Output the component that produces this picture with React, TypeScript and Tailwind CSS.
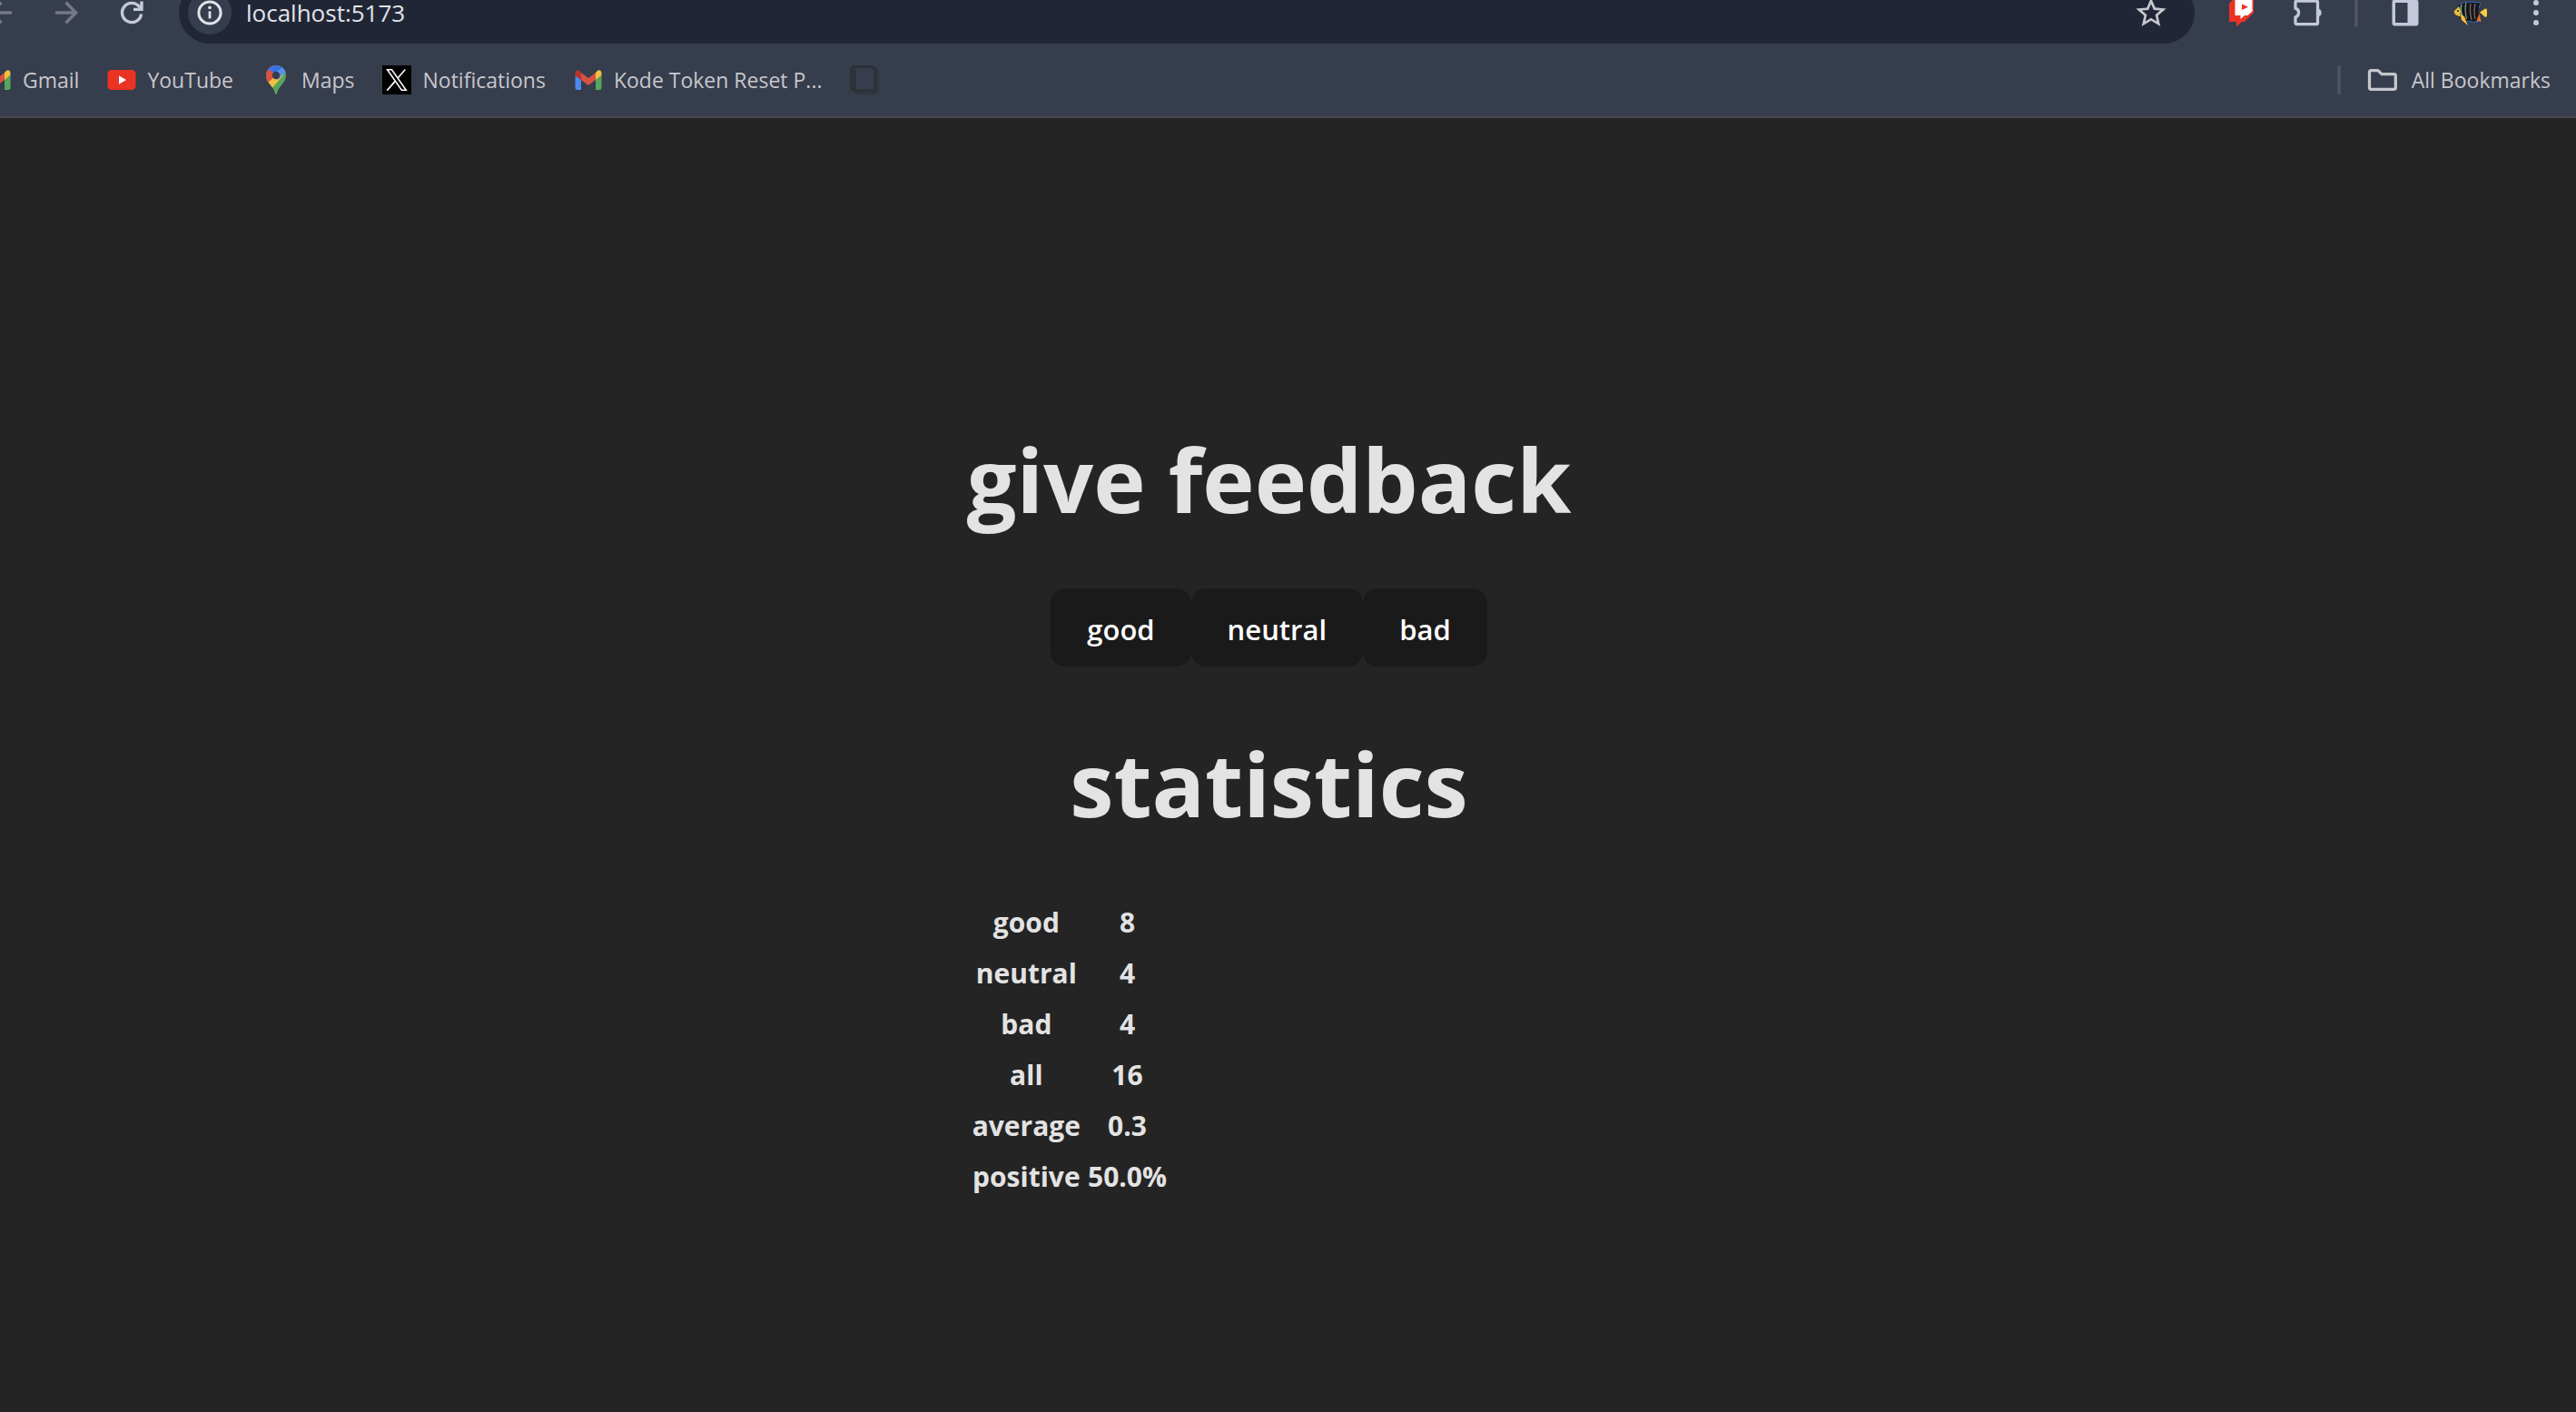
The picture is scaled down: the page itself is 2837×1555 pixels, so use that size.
import React, { useState } from "react";

const iconButton = "flex h-10 w-10 shrink-0 items-center justify-center";

function BackIcon() {
  return (
    <svg viewBox="0 0 40 40" className="h-10 w-10" fill="none" stroke="#747888" strokeWidth="3.4">
      <path d="M32 20H10M20.5 8.8 9.3 20l11.2 11.2" />
    </svg>
  );
}

function ForwardIcon() {
  return (
    <svg viewBox="0 0 40 40" className="h-10 w-10" fill="none" stroke="#747888" strokeWidth="3.4">
      <path d="M8 20h22M19.5 8.8 30.7 20 19.5 31.2" />
    </svg>
  );
}

function ReloadIcon() {
  return (
    <svg viewBox="0 0 40 40" className="h-10 w-10" fill="none" stroke="#c3c8dd" strokeWidth="3.4">
      <path d="M30.6 21.5A10.6 10.6 0 1 1 28.4 13.4L30.5 16" />
      <path d="M31 7.5V16.4H22" />
    </svg>
  );
}

function InfoIcon() {
  return (
    <svg viewBox="0 0 48 48" className="h-12 w-12">
      <circle cx="24" cy="24" r="24" fill="#363d4c" />
      <circle cx="24" cy="24" r="12.1" fill="none" stroke="#e3e3e8" strokeWidth="3" />
      <path d="M24 22.4v8" stroke="#e3e3e8" strokeWidth="2.8" />
      <circle cx="24" cy="18.4" r="1.8" fill="#e3e3e8" />
    </svg>
  );
}

function StarIcon() {
  return (
    <svg viewBox="0 0 24 24" className="h-10 w-10" fill="#c7c7cc">
      <path d="m22 9.24-7.19-.62L12 2 9.19 8.63 2 9.24l5.46 4.73L5.82 21 12 17.27 18.18 21l-1.63-7.03L22 9.24zM12 15.4l-3.76 2.27 1-4.28-3.32-2.88 4.38-.38L12 6.1l1.71 4.04 4.38.38-3.32 2.88 1 4.28L12 15.4z" />
    </svg>
  );
}

function StreamIcon() {
  return (
    <svg viewBox="0 0 40 40" className="h-10 w-10">
      <path d="M6 10 10 6H33V20L23 30H20L14 35.500V30H6Z" fill="#ea3323" />
      <path d="M12.500 4H31.500V18.500L26.500 23H23L18.500 27V23H12.500Z" fill="#fff" />
      <path d="M20 10.500 27 13.700 20 17Z" fill="#ea3323" />
    </svg>
  );
}

function PuzzleIcon() {
  return (
    <svg viewBox="0 0 40 40" className="h-10 w-10" fill="none" stroke="#c3c8dd" strokeWidth="3.300" strokeLinejoin="round">
      <path d="M7 8.500Q7 7 8.500 7H30Q31.500 7 31.500 8.500V31Q31.500 32.700 30 32.700H8.500Q7 32.700 7 31V24.800A5 5 0 0 0 7 15.200Z" />
      <path d="M32 15.200A5 5 0 0 1 32 24.800Z" fill="#c3c8dd" stroke="none" />
    </svg>
  );
}

function SidePanelIcon() {
  return (
    <svg viewBox="0 0 40 40" className="h-10 w-10">
      <rect x="5.500" y="5.500" width="29" height="29" rx="3" fill="#c3c8dd" />
      <rect x="9" y="9" width="13.500" height="22" fill="#363d4c" />
    </svg>
  );
}

function FishIcon() {
  return (
    <svg viewBox="0 0 40 28" className="h-7 w-10">
      <path d="M2 13 8 5 14 2.500 31 3 28.500 11V15L31 24 15 23 7 19Z" fill="#17171a" />
      <path d="M8 4.500 14 2.200H24L31 3 29 9" fill="none" stroke="#3663b8" strokeWidth="1" />
      <path d="M1.500 12.500 7 7 9 12 8 18.500 3 16Z" fill="#f0bd36" />
      <path d="M8 15 13 18 14.500 22 17 28 10 22Z" fill="#f7bd3c" />
      <path d="M26 24 29.500 15 31.500 24Z" fill="#e8702a" />
      <path d="M30 13.500 36 9.500Q38 9 38 11V17Q38 19 36 19Z" fill="#f8cc42" />
      <path d="M10 5Q8 11 11 18" fill="none" stroke="#7cc0a5" strokeWidth="1.300" />
      <path d="M15 3Q13 10 15.500 21" fill="none" stroke="#8f9a8b" strokeWidth="1.200" />
      <path d="M20 4Q18.500 12 21 22M25 4Q23 12 25 21" fill="none" stroke="#7f6f75" strokeWidth="1.200" />
      <path d="M16 23 23 24.500 30 23.500" fill="none" stroke="#2d62c7" strokeWidth="1" />
      <circle cx="6" cy="12" r="1" fill="#17171a" />
    </svg>
  );
}

function MenuDotsIcon() {
  return (
    <svg viewBox="0 0 40 40" className="h-10 w-10" fill="#c3c8dd">
      <circle cx="20" cy="9" r="3" />
      <circle cx="20" cy="20" r="3" />
      <circle cx="20" cy="31" r="3" />
    </svg>
  );
}

function GmailIcon() {
  return (
    <svg viewBox="0 0 32 32" className="h-8 w-8 shrink-0">
      <path d="M1.500 11 8 16V27H4Q1.500 27 1.500 24.500Z" fill="#4f87ed" />
      <path d="M24 16 30.500 11V24.500Q30.500 27 28 27H24Z" fill="#58a65c" />
      <path d="M8 8 16 14 24 8V16L16 22 8 16Z" fill="#d95140" />
      <path d="M1.500 8.500C1.500 5 5 3.500 8 8V16L1.500 11Z" fill="#b7352d" />
      <path d="M30.500 8.500C30.500 5 27 3.500 24 8V16L30.500 11Z" fill="#f3bf42" />
    </svg>
  );
}

function YouTubeIcon() {
  return (
    <svg viewBox="0 0 32 32" className="h-8 w-8 shrink-0">
      <rect x="0.500" y="5" width="31" height="22" rx="4.500" fill="#ea3323" />
      <path d="M13 11.300V20.700L21 16Z" fill="#fff" />
    </svg>
  );
}

function MapsIcon() {
  return (
    <svg viewBox="0 0 32 32" className="h-8 w-8 shrink-0">
      <clipPath id="pin">
        <path d="M16 0A11 11 0 0 1 27 11C27 19.500 18.500 22.500 17 31Q16 33 15 31C13.500 22.500 5 19.500 5 11A11 11 0 0 1 16 0Z" />
      </clipPath>
      <g clipPath="url(#pin)">
        <rect width="32" height="32" fill="#58a65c" />
        <path d="M0 20 16 3 24 11 10 27Z" fill="#f3bf42" />
        <path d="M0 0H16V11L6.500 19.500 0 16Z" fill="#d95140" />
        <path d="M7.500 4 16-4 28 2 26 6 16 11Z" fill="#3a72e0" />
        <path d="M23.500 2 32 8 25.500 8 18 16 13 10Z" fill="#5a8ff0" />
      </g>
      <circle cx="16" cy="11" r="4.200" fill="#363d4c" />
    </svg>
  );
}

function XIcon() {
  return (
    <svg viewBox="0 0 32 32" className="h-8 w-8 shrink-0">
      <rect width="32" height="32" fill="#000" />
      <path d="M5.500 4.800H10.500L26.300 27.300H21.300Z" fill="none" stroke="#fff" strokeWidth="1.500" />
      <path d="M25.300 4.500 17.300 13.800M14 17.600 5.300 27.600" stroke="#fff" strokeWidth="1.600" />
    </svg>
  );
}

function CubeIcon() {
  return (
    <svg viewBox="0 0 32 32" className="h-8 w-8 shrink-0" fill="none" stroke="#2e3035">
      <path d="M4 1.500H25L28 4.500V28H7L2 26V3.500Z" strokeWidth="3" />
      <path d="M5.500 4V28" strokeWidth="2" />
      <path d="M27 3 31 7V29L29 31H9L4 28" strokeWidth="1.500" opacity="0.7" />
    </svg>
  );
}

function FolderIcon() {
  return (
    <svg viewBox="0 0 36 32" className="h-8 w-9 shrink-0" fill="none" stroke="#c7c7cc" strokeWidth="3.300" strokeLinejoin="round">
      <path d="M3.500 7.500Q3.500 5.700 5.300 5.700H13L17 9.700H30.500Q32.300 9.700 32.300 11.500V24.500Q32.300 26.300 30.500 26.300H5.300Q3.500 26.300 3.500 24.500Z" />
    </svg>
  );
}

const bookmarks = [
  { label: "Gmail", icon: <GmailIcon /> },
  { label: "YouTube", icon: <YouTubeIcon /> },
  { label: "Maps", icon: <MapsIcon /> },
  { label: "Notifications", icon: <XIcon /> },
  { label: "Kode Token Reset P...", icon: <GmailIcon /> },
  { label: "", icon: <CubeIcon /> },
];

function Toolbar() {
  return (
    <div className="-mt-5 flex h-[68px] items-center">
      <div className="-ml-[19px] flex gap-8">
        <button aria-label="Back" className={iconButton}><BackIcon /></button>
        <button aria-label="Forward" className={iconButton}><ForwardIcon /></button>
        <button aria-label="Reload" className={iconButton}><ReloadIcon /></button>
      </div>
      <div className="ml-8 flex h-full flex-1 items-center rounded-full bg-[#202636] pl-[10px] pr-7">
        <button aria-label="Site information" className="shrink-0"><InfoIcon /></button>
        <input
          aria-label="Address"
          defaultValue="localhost:5173"
          className="ml-4 min-w-0 flex-1 bg-transparent text-[26px] leading-9 text-[#e3e3e8] outline-none"
        />
        <button aria-label="Bookmark this page" className={iconButton}><StarIcon /></button>
      </div>
      <div className="flex items-center pl-8 pr-6">
        <button aria-label="Stream extension" className={iconButton}><StreamIcon /></button>
        <button aria-label="Extensions" className={iconButton + " ml-8"}><PuzzleIcon /></button>
        <span className="ml-8 h-8 w-1 rounded-full bg-[#4d5365]" />
        <button aria-label="Side panel" className={iconButton + " ml-8"}><SidePanelIcon /></button>
        <button aria-label="Profile" className={iconButton + " ml-8"}><FishIcon /></button>
        <button aria-label="Menu" className={iconButton + " ml-8"}><MenuDotsIcon /></button>
      </div>
    </div>
  );
}

function BookmarkBar() {
  return (
    <nav aria-label="Bookmarks" className="flex h-20 items-center justify-between pr-7 text-[23px] leading-8 text-[#c7c7cc]">
      <div className="-ml-[19px] flex gap-[31px]">
        {bookmarks.map((b, i) => (
          <a key={i} href="#" aria-label={b.label || "Bookmark"} className="flex items-center gap-3 whitespace-nowrap">
            {b.icon}
            {b.label && <span>{b.label}</span>}
          </a>
        ))}
      </div>
      <div className="flex items-center">
        <span className="h-8 w-1 rounded-full bg-[#4d5365]" />
        <button className="ml-7 flex items-center gap-[14px] whitespace-nowrap">
          <FolderIcon />
          All Bookmarks
        </button>
      </div>
    </nav>
  );
}

function FeedbackButton({ label, onClick }: { label: string; onClick: () => void }) {
  return (
    <button
      onClick={onClick}
      className="h-[86px] rounded-2xl bg-[#1a1a1a] px-10 pt-1 text-[31px] font-semibold leading-10 text-white"
    >
      {label}
    </button>
  );
}

export default function App() {
  const [good, setGood] = useState(8);
  const [neutral, setNeutral] = useState(4);
  const [bad, setBad] = useState(4);
  const all = good + neutral + bad;
  const rows = [
    ["good", String(good)],
    ["neutral", String(neutral)],
    ["bad", String(bad)],
    ["all", String(all)],
    ["average", ((good - bad) / all).toFixed(1)],
    ["positive", ((good / all) * 100).toFixed(1) + "%"],
  ];

  return (
    <div className="flex min-h-screen flex-col bg-[#242424] font-['Open_Sans','Noto_Sans',sans-serif]">
      <header className="overflow-hidden border-b-2 border-[#4a4a4e] bg-[#363d4c]">
        <Toolbar />
        <BookmarkBar />
      </header>
      <main className="flex justify-center pb-16 pr-[42px] pt-[341px] text-[#e3e3e3]">
        <div className="flex flex-col">
          <h1 className="text-center text-[97px] font-bold leading-[112px]">give feedback</h1>
          <div className="mt-[65px] flex justify-center">
            <FeedbackButton label="good" onClick={() => setGood(good + 1)} />
            <FeedbackButton label="neutral" onClick={() => setNeutral(neutral + 1)} />
            <FeedbackButton label="bad" onClick={() => setBad(bad + 1)} />
          </div>
          <h1 className="mt-[72px] text-center text-[97px] font-bold leading-[112px]">statistics</h1>
          <table className="mt-[68px] w-fit border-separate border-spacing-1 text-center text-[30px] font-bold leading-[48px]">
            <tbody>
              {rows.map(([name, value]) => (
                <tr key={name}>
                  <th scope="row" className="p-[2px]">{name}</th>
                  <td className="p-[2px]">{value}</td>
                </tr>
              ))}
            </tbody>
          </table>
        </div>
      </main>
    </div>
  );
}
